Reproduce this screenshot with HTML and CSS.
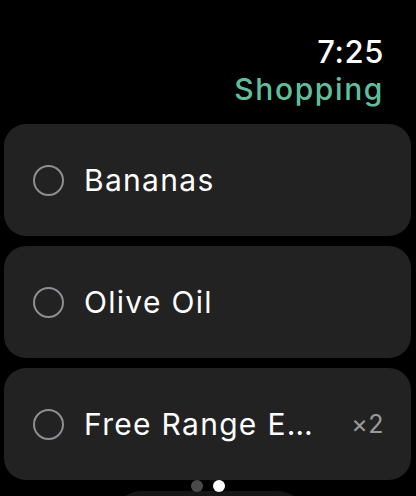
FILE: index.html
```html
<!DOCTYPE html>
<html>
<head>
<meta charset="utf-8">
<link rel="stylesheet" href="styles.css">
</head>
<body>
<div class="screen">
  <header class="header">
    <div class="time">7:25</div>
    <div class="title">Shopping</div>
  </header>
  <div class="list">
    <div class="card">
      <span class="check"></span>
      <span class="label">Bananas</span>
    </div>
    <div class="card">
      <span class="check"></span>
      <span class="label">Olive Oil</span>
    </div>
    <div class="card">
      <span class="check"></span>
      <span class="label">Free Range Eggs</span>
      <span class="qty">×2</span>
    </div>
    <div class="add-btn"></div>
  </div>
  <div class="dots"><span class="dot"></span><span class="dot active"></span></div>
</div>
</body>
</html>
```

FILE: styles.css
```css
html, body {
  margin: 0;
  padding: 0;
  background: #000;
  height: 100%;
  overflow: hidden;
}
.screen {
  position: relative;
  width: 416px;
  height: 496px;
  overflow: hidden;
  font-family: Inter, "Noto Sans", sans-serif;
  color: #fff;
}
.header {
  display: flex;
  flex-direction: column;
  align-items: flex-end;
  padding: 33px 32px 0 0;
  height: 91px;
  box-sizing: border-box;
}
.time {
  font-size: 31px;
  font-weight: 500;
  line-height: 37px;
  letter-spacing: 0.6px;
}
.title {
  font-size: 30px;
  font-weight: 500;
  line-height: 38px;
  color: #5fbf9a;
  letter-spacing: 1.6px;
}
.list {
  display: flex;
  flex-direction: column;
  gap: 10px;
  padding: 33px 5px 0 4px;
}
.card {
  height: 112px;
  background: #222222;
  border-radius: 22px;
  display: flex;
  align-items: center;
  padding: 0 27px 0 29px;
  box-sizing: border-box;
}
.check {
  flex: none;
  width: 31px;
  height: 31px;
  box-sizing: border-box;
  border: 2px solid #8e8e93;
  border-radius: 50%;
  margin-right: 20px;
}
.label {
  flex: 1;
  min-width: 0;
  font-size: 30px;
  letter-spacing: 1.3px;
  white-space: nowrap;
  overflow: hidden;
  text-overflow: ellipsis;
  padding-right: 26px;
}
.qty {
  flex: none;
  font-size: 25px;
  letter-spacing: 0.5px;
  color: #9a9a9e;
}
.add-btn {
  align-self: center;
  width: 195px;
  height: 60px;
  margin-top: 1px;
  margin-left: 4px;
  background: #161616;
  border-radius: 30px;
}
.dots {
  position: absolute;
  left: 191px;
  top: 480px;
  display: flex;
  gap: 10px;
}
.dot {
  width: 12px;
  height: 12px;
  border-radius: 50%;
  background: #4a4a4a;
}
.dot.active {
  background: #fff;
}
```
